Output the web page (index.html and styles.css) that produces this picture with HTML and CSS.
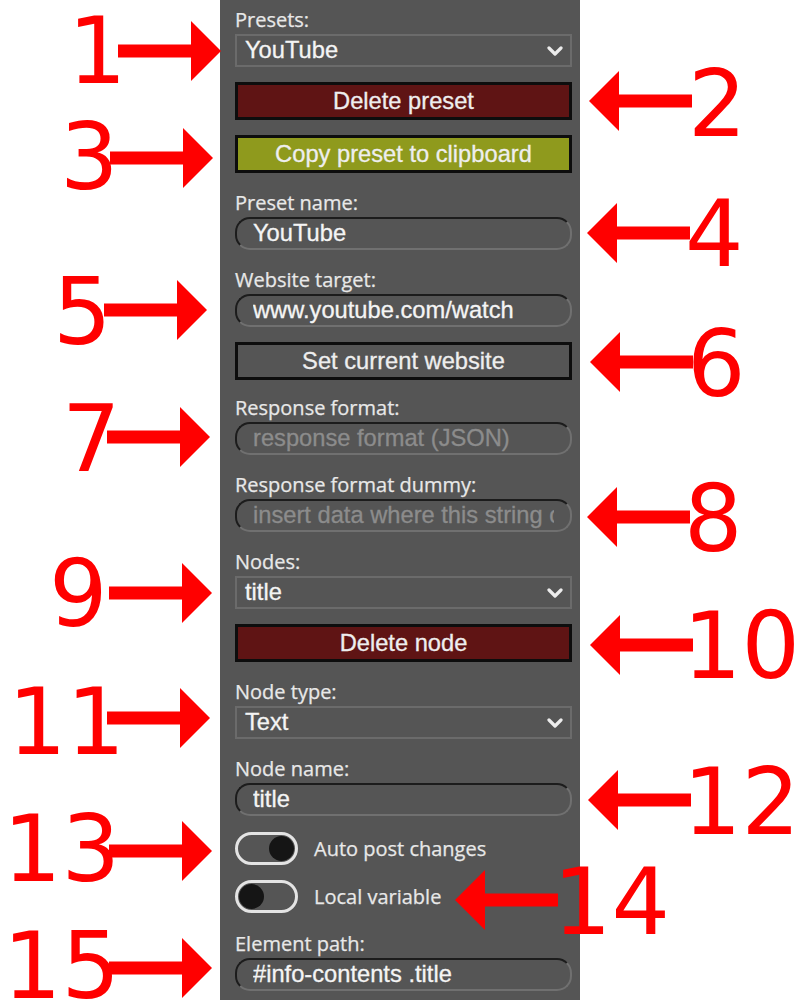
FILE: index.html
```html
<!DOCTYPE html>
<html lang="en">
<head>
<meta charset="utf-8">
<title>Preset editor</title>
<link rel="stylesheet" href="styles.css">
</head>
<body>
<div class="page">
  <aside class="panel">
    <div class="field first">
      <div class="label">Presets:</div>
      <div class="select"><span>YouTube</span><svg class="chev" viewBox="0 0 16 10"><polyline points="2,2 8,8 14,2"/></svg></div>
    </div>
    <button class="btn btn-red">Delete preset</button>
    <button class="btn btn-olive">Copy preset to clipboard</button>
    <div class="field">
      <div class="label">Preset name:</div>
      <input class="input" type="text" value="YouTube">
    </div>
    <div class="field">
      <div class="label">Website target:</div>
      <input class="input" type="text" value="www.youtube.com/watch">
    </div>
    <button class="btn btn-plain">Set current website</button>
    <div class="field after-btn">
      <div class="label">Response format:</div>
      <input class="input" type="text" placeholder="response format (JSON)">
    </div>
    <div class="field">
      <div class="label">Response format dummy:</div>
      <input class="input" type="text" placeholder="insert data where this string occurs">
    </div>
    <div class="field">
      <div class="label">Nodes:</div>
      <div class="select"><span>title</span><svg class="chev" viewBox="0 0 16 10"><polyline points="2,2 8,8 14,2"/></svg></div>
    </div>
    <button class="btn btn-red">Delete node</button>
    <div class="field">
      <div class="label">Node type:</div>
      <div class="select"><span>Text</span><svg class="chev" viewBox="0 0 16 10"><polyline points="2,2 8,8 14,2"/></svg></div>
    </div>
    <div class="field">
      <div class="label">Node name:</div>
      <input class="input" type="text" value="title">
    </div>
    <div class="toggle-row first-toggle">
      <div class="toggle on"><div class="knob"></div></div>
      <span class="toggle-text">Auto post changes</span>
    </div>
    <div class="toggle-row">
      <div class="toggle"><div class="knob"></div></div>
      <span class="toggle-text">Local variable</span>
    </div>
    <div class="field last">
      <div class="label">Element path:</div>
      <input class="input" type="text" value="#info-contents .title">
    </div>
  </aside>

  <div class="notes">
    <svg class="arrow a1" viewBox="0 0 103 60"><polygon points="0,23.5 73,23.5 73,0 103,30 73,60 73,36.5 0,36.5"/></svg>
    <svg class="arrow left a2" viewBox="0 0 103 60"><polygon points="0,23.5 73,23.5 73,0 103,30 73,60 73,36.5 0,36.5"/></svg>
    <svg class="arrow a3" viewBox="0 0 103 60"><polygon points="0,23.5 73,23.5 73,0 103,30 73,60 73,36.5 0,36.5"/></svg>
    <svg class="arrow left a4" viewBox="0 0 103 60"><polygon points="0,23.5 73,23.5 73,0 103,30 73,60 73,36.5 0,36.5"/></svg>
    <svg class="arrow a5" viewBox="0 0 103 60"><polygon points="0,23.5 73,23.5 73,0 103,30 73,60 73,36.5 0,36.5"/></svg>
    <svg class="arrow left a6" viewBox="0 0 103 60"><polygon points="0,23.5 73,23.5 73,0 103,30 73,60 73,36.5 0,36.5"/></svg>
    <svg class="arrow a7" viewBox="0 0 103 60"><polygon points="0,23.5 73,23.5 73,0 103,30 73,60 73,36.5 0,36.5"/></svg>
    <svg class="arrow left a8" viewBox="0 0 103 60"><polygon points="0,23.5 73,23.5 73,0 103,30 73,60 73,36.5 0,36.5"/></svg>
    <svg class="arrow a9" viewBox="0 0 103 60"><polygon points="0,23.5 73,23.5 73,0 103,30 73,60 73,36.5 0,36.5"/></svg>
    <svg class="arrow left a10" viewBox="0 0 103 60"><polygon points="0,23.5 73,23.5 73,0 103,30 73,60 73,36.5 0,36.5"/></svg>
    <svg class="arrow a11" viewBox="0 0 103 60"><polygon points="0,23.5 73,23.5 73,0 103,30 73,60 73,36.5 0,36.5"/></svg>
    <svg class="arrow left a12" viewBox="0 0 103 60"><polygon points="0,23.5 73,23.5 73,0 103,30 73,60 73,36.5 0,36.5"/></svg>
    <svg class="arrow a13" viewBox="0 0 103 60"><polygon points="0,23.5 73,23.5 73,0 103,30 73,60 73,36.5 0,36.5"/></svg>
    <svg class="arrow left a14" viewBox="0 0 103 60"><polygon points="0,23.5 73,23.5 73,0 103,30 73,60 73,36.5 0,36.5"/></svg>
    <svg class="arrow a15" viewBox="0 0 103 60"><polygon points="0,23.5 73,23.5 73,0 103,30 73,60 73,36.5 0,36.5"/></svg>

    <span class="num n1">1</span>
    <span class="num n2">2</span>
    <span class="num n3">3</span>
    <span class="num n4">4</span>
    <span class="num n5">5</span>
    <span class="num n6">6</span>
    <span class="num n7">7</span>
    <span class="num n8">8</span>
    <span class="num n9">9</span>
    <span class="num n10">10</span>
    <span class="num n11">11</span>
    <span class="num n12">12</span>
    <span class="num n13">13</span>
    <span class="num n14">14</span>
    <span class="num n15">15</span>
  </div>
</div>
</body>
</html>
```

FILE: styles.css
```css
html, body {
  margin: 0;
  padding: 0;
  background: #ffffff;
}

.page {
  position: relative;
  width: 800px;
  height: 1000px;
  overflow: hidden;
  display: flex;
  justify-content: center;
}

.panel {
  width: 360px;
  height: 1000px;
  box-sizing: border-box;
  background: #555555;
  padding: 9px 8px 0 15px;
  display: flex;
  flex-direction: column;
}

.field {
  margin-top: 19px;
}
.field.first {
  margin-top: 0;
}
.field.after-btn {
  margin-top: 17px;
}
.field.last {
  margin-top: 20px;
}

.label {
  font-family: "Open Sans", "Noto Sans", sans-serif;
  font-size: 20px;
  line-height: 22px;
  color: #e8e8e8;
  -webkit-text-stroke: 0.25px #e8e8e8;
  margin-bottom: 3px;
  white-space: nowrap;
}

.select {
  height: 33px;
  box-sizing: border-box;
  border: 2px solid #6b6b6b;
  display: flex;
  align-items: center;
  justify-content: space-between;
  padding: 0 7px 0 8px;
  font-family: "Liberation Sans", Arial, sans-serif;
  font-size: 23.7px;
  color: #f4f4f4;
  -webkit-text-stroke: 0.3px #f4f4f4;
}

.chev {
  width: 16px;
  height: 10px;
  fill: none;
  stroke: #ececec;
  stroke-width: 3.2;
  stroke-linecap: round;
  stroke-linejoin: round;
}

.input {
  display: block;
  width: 100%;
  height: 33px;
  box-sizing: border-box;
  margin: 0;
  border: 2px solid;
  border-color: #1c1c1c #707070 #707070 #1c1c1c;
  border-radius: 15px;
  background: transparent;
  padding: 0 16px;
  font-family: "Liberation Sans", Arial, sans-serif;
  font-size: 23.7px;
  color: #f4f4f4;
  -webkit-text-stroke: 0.3px #f4f4f4;
  outline: none;
}
.input::placeholder {
  color: #8c8c8c;
  -webkit-text-stroke: 0.3px #8c8c8c;
  opacity: 1;
}

.btn {
  display: block;
  width: 100%;
  height: 38px;
  box-sizing: border-box;
  margin: 15px 0 0;
  padding: 0;
  border: 3px solid #0d0d0d;
  font-family: "Liberation Sans", Arial, sans-serif;
  font-size: 23.7px;
  color: #eeeeee;
  -webkit-text-stroke: 0.3px #eeeeee;
  text-align: center;
}
.btn-red {
  background: #5f1414;
}
.btn-olive {
  background: #8f9a1d;
}
.btn-plain {
  background: #555555;
}

.toggle-row {
  display: flex;
  align-items: center;
  gap: 16px;
  margin-top: 15px;
}
.toggle-row.first-toggle {
  margin-top: 16px;
}

.toggle {
  width: 63px;
  height: 33px;
  box-sizing: border-box;
  border: 3px solid #e4e4e4;
  border-radius: 17px;
  display: flex;
  align-items: center;
  padding: 0 1px;
}
.toggle.on {
  justify-content: flex-end;
}
.knob {
  width: 25px;
  height: 25px;
  border-radius: 50%;
  background: #151515;
}

.toggle-text {
  font-family: "Open Sans", "Noto Sans", sans-serif;
  font-size: 20px;
  color: #e8e8e8;
  -webkit-text-stroke: 0.25px #e8e8e8;
  white-space: nowrap;
}

/* annotation overlay */
.notes {
  position: absolute;
  left: 0;
  top: 0;
  width: 800px;
  height: 1000px;
  pointer-events: none;
}

.num {
  position: absolute;
  font-family: "DejaVu Sans", sans-serif;
  font-size: 92px;
  line-height: 66px;
  color: #ff0000;
  white-space: nowrap;
}

.arrow {
  position: absolute;
  width: 103px;
  height: 60px;
  fill: #ff0000;
}
.arrow.left {
  transform: scaleX(-1);
}

.n1 { left: 68px; top: 19px; }
.n2 { left: 688px; top: 72px; }
.n3 { left: 60px; top: 125px; }
.n4 { left: 685px; top: 202px; }
.n5 { left: 53px; top: 280px; }
.n6 { left: 687px; top: 332px; }
.n7 { left: 62px; top: 407px; }
.n8 { left: 684px; top: 487px; }
.n9 { left: 49px; top: 562px; }
.n10 { left: 683px; top: 614px; }
.n11 { left: 8px; top: 690px; }
.n12 { left: 683px; top: 770px; }
.n13 { left: 3px; top: 817px; }
.n14 { left: 553px; top: 870px; }
.n15 { left: 3px; top: 934px; }

.a1 { left: 118px; top: 21px; }
.a2 { left: 589px; top: 71px; }
.a3 { left: 110px; top: 128px; }
.a4 { left: 587px; top: 203px; }
.a5 { left: 104px; top: 280px; }
.a6 { left: 590px; top: 332px; }
.a7 { left: 107px; top: 407px; }
.a8 { left: 587px; top: 487px; }
.a9 { left: 109px; top: 563px; }
.a10 { left: 590px; top: 615px; }
.a11 { left: 107px; top: 688px; }
.a12 { left: 588px; top: 770px; }
.a13 { left: 109px; top: 821px; }
.a14 { left: 455px; top: 870px; }
.a15 { left: 109px; top: 938px; }
```
